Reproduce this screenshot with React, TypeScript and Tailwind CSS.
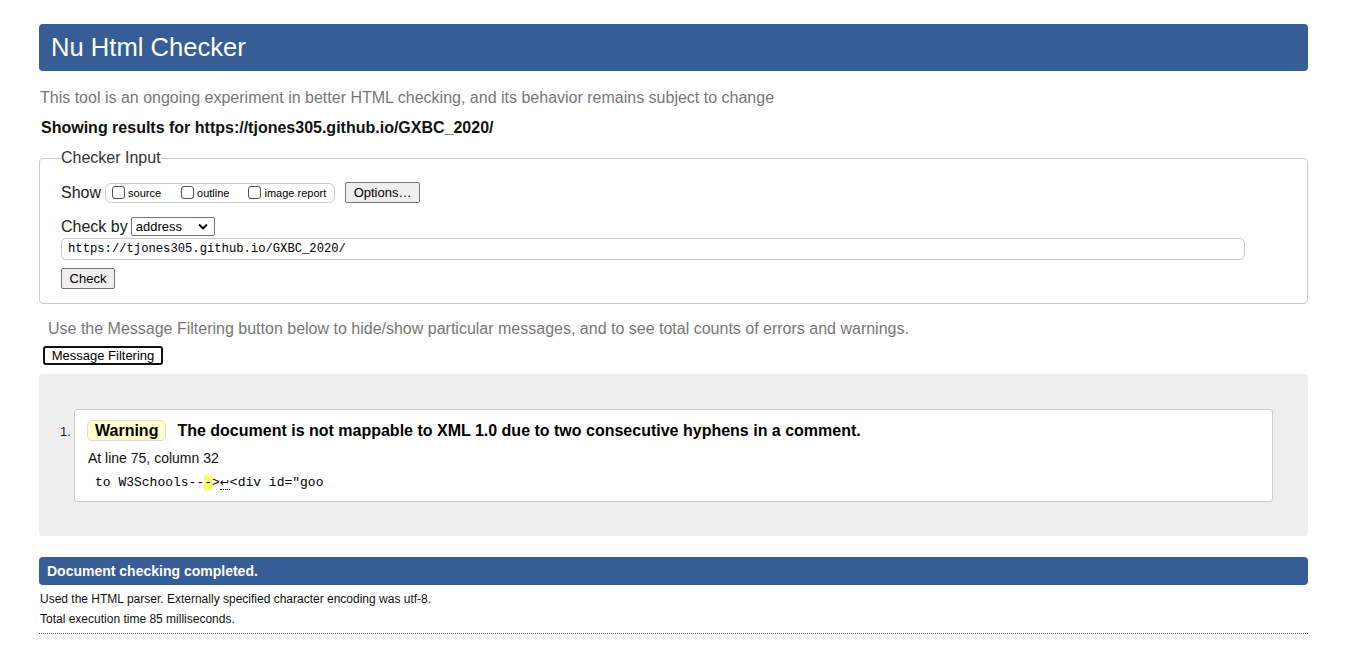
import React from "react";

const sans = { fontFamily: '"Liberation Sans", Arial, sans-serif' };

export default function App() {
  return (
    <div className="min-h-[653px] bg-white px-[39px] pt-[24px] text-[#000]" style={sans}>
      <div className="flex h-[47px] items-center rounded-[4px] bg-[#365d95] pl-[12px]">
        <h1 className="text-[25.6px] font-normal leading-none text-white">Nu Html Checker</h1>
      </div>
      <p className="mt-[18px] pl-[1px] text-[16px] leading-[18px] text-[#777]">
        This tool is an ongoing experiment in better HTML checking, and its behavior remains subject to change
      </p>
      <p className="mt-[12px] pl-[2px] text-[16px] font-bold leading-[18px] text-[#111]">
        Showing results for https://tjones305.github.io/GXBC_2020/
      </p>
      <fieldset className="mt-[12px] rounded-[4px] border border-[#ccc] px-[21px] pb-[14px] pt-[15px]">
        <legend className="ml-[0px] px-[0px] text-[16px] leading-[18px] text-[#333]">Checker Input</legend>
        <div className="flex items-center">
          <span className="text-[16px] leading-[18px] text-[#222]">Show</span>
          <div className="ml-[4px] flex h-[20px] w-[230px] items-center rounded-[6px] border border-[#ccc] pl-[6px]">
            <label className="flex items-center text-[11px] leading-none">
              <span className="inline-block h-[13px] w-[13px] rounded-[3px] border border-[#555] bg-white"></span>
              <span className="ml-[3px] mt-[2px]">source</span>
            </label>
            <label className="ml-[20px] flex items-center text-[11px] leading-none">
              <span className="inline-block h-[13px] w-[13px] rounded-[3px] border border-[#555] bg-white"></span>
              <span className="ml-[3px] mt-[2px]">outline</span>
            </label>
            <label className="ml-[19px] flex items-center text-[11px] leading-none">
              <span className="inline-block h-[13px] w-[13px] rounded-[3px] border border-[#555] bg-white"></span>
              <span className="ml-[3px] mt-[2px]">image report</span>
            </label>
          </div>
          <button className="ml-[10px] h-[21px] w-[75px] rounded-[2px] border border-[#767676] bg-[#efefef] text-[13px] leading-none text-black">
            Options…
          </button>
        </div>
        <div className="mt-[14px] flex items-center">
          <span className="text-[16px] leading-[18px] text-[#222]">Check by</span>
          <div className="ml-[3px] flex h-[19px] w-[84px] items-center justify-between rounded-[2px] border border-[#767676] bg-white pl-[4px] pr-[6px]">
            <span className="text-[13px] leading-none">address</span>
            <svg width="10" height="7" viewBox="0 0 10 7">
              <path d="M1 1.5 L5 5.5 L9 1.5" fill="none" stroke="#000" strokeWidth="1.8" />
            </svg>
          </div>
        </div>
        <div className="mt-[2px] flex h-[22px] w-[1184px] items-center rounded-[5px] border border-[#ccc] pl-[6px]">
          <span className="text-[12.2px] leading-none text-black" style={{ fontFamily: '"Liberation Mono", "DejaVu Sans Mono", monospace' }}>
            https://tjones305.github.io/GXBC_2020/
          </span>
        </div>
        <button className="mt-[8px] flex h-[21px] w-[54px] items-center justify-center rounded-[2px] border border-[#767676] bg-[#efefef] text-[13px] leading-none text-black">
          Check
        </button>
      </fieldset>
      <p className="mt-[16px] pl-[9px] text-[16px] leading-[18px] text-[#777]">
        Use the Message Filtering button below to hide/show particular messages, and to see total counts of errors and warnings.
      </p>
      <button className="ml-[4px] mt-[8px] flex h-[19px] w-[120px] items-center justify-center rounded-[3px] border-2 border-[#111] bg-white text-[13px] leading-none text-black">
        Message Filtering
      </button>
      <div className="mt-[9px] rounded-[4px] bg-[#eee] pb-[34px] pl-[21px] pr-[35px] pt-[35px]">
        <div className="flex">
          <span className="mt-[16px] w-[14px] text-[13px] leading-none text-[#222]">1.</span>
          <div className="h-[93px] flex-1 rounded-[3px] border border-[#ccc] bg-white pl-[12px] pt-[10px]">
            <div className="flex items-center">
              <span className="flex h-[21px] items-center rounded-[5px] border border-[#ddd] bg-[#ffffcc] px-[7px] text-[16px] font-bold leading-none">
                Warning
              </span>
              <span className="ml-[11px] text-[16px] font-bold leading-none text-black">
                The document is not mappable to XML 1.0 due to two consecutive hyphens in a comment.
              </span>
            </div>
            <p className="mt-[9px] pl-[1px] text-[14px] leading-[16px] text-[#111]">At line 75, column 32</p>
            <p
              className="mt-[9px] h-[16px] pl-[8px] text-[13px] leading-[16px] text-black"
              style={{ fontFamily: '"Liberation Mono", "DejaVu Sans Mono", monospace' }}
            >
              <span>to W3Schools--</span>
              <span className="bg-[#ffff66]">-</span>
              <span>&gt;</span>
              <span
                className="inline-block w-[10px] overflow-visible border-b border-dotted border-black text-[11px] leading-[13px]"
                style={{ fontFamily: '"DejaVu Sans", sans-serif' }}
              >
                ↩
              </span>
              <span>&lt;div id="goo</span>
            </p>
          </div>
        </div>
      </div>
      <div className="mt-[21px] flex h-[28px] items-center rounded-[4px] bg-[#365d95] pl-[8px]">
        <span className="text-[14px] font-bold leading-none text-white">Document checking completed.</span>
      </div>
      <p className="mt-[7px] pl-[1px] text-[12px] leading-[14px] text-[#111]">
        Used the HTML parser. Externally specified character encoding was utf-8.
      </p>
      <p className="mt-[6px] pl-[1px] text-[12px] leading-[14px] text-[#111]">Total execution time 85 milliseconds.</p>
      <div className="mt-[7px] border-b border-dotted border-[#555]"></div>
    </div>
  );
}
